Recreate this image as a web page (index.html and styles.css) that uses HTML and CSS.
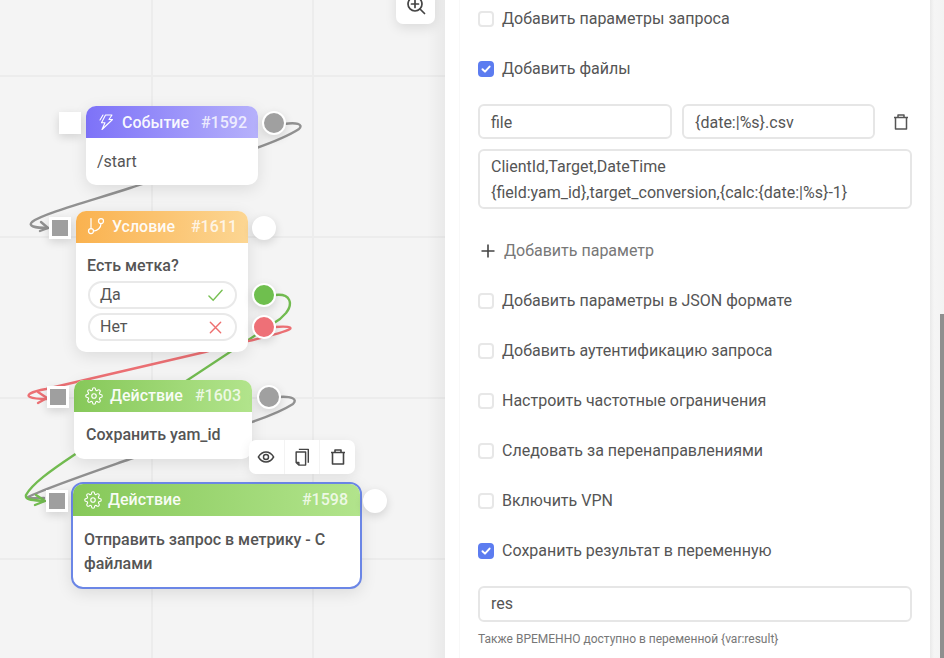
FILE: index.html
```html
<!DOCTYPE html>
<html lang="ru">
<head>
<meta charset="utf-8">
<title>Редактор сценария</title>
<link rel="stylesheet" href="styles.css">
</head>
<body>
<svg class="defs" width="0" height="0" aria-hidden="true">
  <symbol id="gear" viewBox="0 0 24 24">
    <circle cx="12" cy="12" r="3"/>
    <path d="M19.4 15a1.65 1.65 0 0 0 .33 1.82l.06.06a2 2 0 0 1 0 2.83 2 2 0 0 1-2.83 0l-.06-.06a1.65 1.65 0 0 0-1.82-.33 1.65 1.65 0 0 0-1 1.51V21a2 2 0 0 1-2 2 2 2 0 0 1-2-2v-.09A1.65 1.65 0 0 0 9 19.4a1.65 1.65 0 0 0-1.82.33l-.06.06a2 2 0 0 1-2.83 0 2 2 0 0 1 0-2.83l.06-.06a1.65 1.65 0 0 0 .33-1.82 1.65 1.65 0 0 0-1.51-1H3a2 2 0 0 1-2-2 2 2 0 0 1 2-2h.09A1.65 1.65 0 0 0 4.6 9a1.65 1.65 0 0 0-.33-1.82l-.06-.06a2 2 0 0 1 0-2.83 2 2 0 0 1 2.83 0l.06.06a1.65 1.65 0 0 0 1.82.33H9a1.65 1.65 0 0 0 1-1.51V3a2 2 0 0 1 2-2 2 2 0 0 1 2 2v.09a1.65 1.65 0 0 0 1 1.51 1.65 1.65 0 0 0 1.82-.33l.06-.06a2 2 0 0 1 2.83 0 2 2 0 0 1 0 2.83l-.06.06a1.65 1.65 0 0 0-.33 1.82V9a1.65 1.65 0 0 0 1.51 1H21a2 2 0 0 1 2 2 2 2 0 0 1-2 2h-.09a1.65 1.65 0 0 0-1.51 1z"/>
  </symbol>
  <symbol id="trash" viewBox="0 0 18 18">
    <path d="M2 4.500h14M6 4.500V2h6v2.500M3.500 4.500V16h11V4.500"/>
  </symbol>
  <symbol id="tick" viewBox="0 0 12 12">
    <path d="M2.500 6.200 5 8.600 9.600 3.600"/>
  </symbol>
</svg>

<div class="app">
  <main class="canvas">
    <svg class="wires" width="445" height="658" viewBox="0 0 445 658" fill="none" aria-hidden="true">
      <g class="wire-grey">
        <path d="M284 124C296 122 304 124 299 129C270 148 190 168 130 188C90 201 42 214 32 222C28 226 34 228 48 228"/>
        <path d="M41 222 48 228 40 231"/>
        <path d="M278 397C292 396 298 399 293 404C262 424 180 442 130 459C90 473 46 488 28 497C30 499 36 498 44 498"/>
      </g>
      <g class="wire-green">
        <path d="M275 295C291 293 293 304 286 313L280 319L74 455C50 471 32 484 26 495C25 500 32 500 44 501"/>
        <path d="M36 495 45 501 35 505"/>
      </g>
      <g class="wire-red">
        <path d="M275 327C287 326 292 327 290 329C280 335 240 342 205 352L46 389C30 392 26 395 30 397C34 399 40 399 47 399"/>
        <path d="M38 392 47 398 38 403"/>
      </g>
    </svg>

    <div class="tool-zoom">
      <svg class="ico-zoom" viewBox="0 0 20 20" fill="none">
        <circle cx="9" cy="9" r="7"/>
        <path d="M9 5.500v7M5.500 9h7M14 14l4.500 4.500"/>
      </svg>
    </div>

    <section class="node node-event">
      <span class="in-port"></span>
      <header class="node-head head-event">
        <svg class="head-ico bolt-ico" viewBox="0 0 16 16" fill="none">
          <path d="M7.500 1H14L11 5.500H14.500L4 15.500 7 8.800H3.500Z"/>
          <path d="M5 1 2 6"/>
        </svg>
        <span class="head-title">Событие</span>
        <span class="head-id">#1592</span>
      </header>
      <div class="node-body">/start</div>
      <span class="out-port port-grey"></span>
    </section>

    <section class="node node-cond">
      <span class="in-port port-in-grey"></span>
      <header class="node-head head-cond">
        <svg class="head-ico branch-ico" viewBox="0 0 24 24" fill="none">
          <path d="M6 3v12M18 9a9 9 0 0 1-9 9"/>
          <circle cx="18" cy="6" r="3"/>
          <circle cx="6" cy="18" r="3"/>
        </svg>
        <span class="head-title">Условие</span>
        <span class="head-id">#1611</span>
      </header>
      <div class="node-body cond-body">
        <div class="cond-title">Есть метка?</div>
        <div class="choice">
          <span>Да</span>
          <svg class="choice-ico ico-yes" viewBox="0 0 16 16" fill="none"><path d="M1 8.500 5.500 13 15 2.500"/></svg>
        </div>
        <div class="choice">
          <span>Нет</span>
          <svg class="choice-ico ico-no" viewBox="0 0 16 16" fill="none"><path d="M2.500 2.500 13.500 13.500M13.500 2.500 2.500 13.500"/></svg>
        </div>
      </div>
      <span class="out-port"></span>
      <span class="out-port port-yes"></span>
      <span class="out-port port-no"></span>
    </section>

    <section class="node node-save">
      <span class="in-port port-in-grey"></span>
      <header class="node-head head-action">
        <svg class="head-ico gear-ico"><use href="#gear"/></svg>
        <span class="head-title">Действие</span>
        <span class="head-id">#1603</span>
      </header>
      <div class="node-body body-strong">Сохранить yam_id</div>
      <span class="out-port port-grey"></span>
    </section>

    <div class="node-tools">
      <span class="tool-cell">
        <svg class="tool-ico" viewBox="0 0 20 20" fill="none">
          <path d="M1.500 10C4 6 7 4.500 10 4.500S16 6 18.500 10C16 14 13 15.500 10 15.500S4 14 1.500 10Z"/>
          <circle cx="10" cy="10" r="2.800"/>
        </svg>
      </span>
      <span class="tool-cell">
        <svg class="tool-ico" viewBox="0 0 20 20" fill="none">
          <path d="M6.500 1.500H17V16.500"/>
          <path d="M3.500 4.500H14V19H6.500L3.500 16Z"/>
          <path d="M3.500 16H6.500V19"/>
        </svg>
      </span>
      <span class="tool-cell">
        <svg class="tool-ico"><use href="#trash"/></svg>
      </span>
    </div>

    <section class="node node-send">
      <span class="in-port port-in-grey"></span>
      <header class="node-head head-action">
        <svg class="head-ico gear-ico"><use href="#gear"/></svg>
        <span class="head-title">Действие</span>
        <span class="head-id">#1598</span>
      </header>
      <div class="node-body body-strong">Отправить запрос в метрику - С файлами</div>
      <span class="out-port"></span>
    </section>
  </main>

  <aside class="panel">
    <div class="form">
      <label class="check-row"><span class="box"></span>Добавить параметры запроса</label>
      <label class="check-row check-files"><span class="box box-on"><svg class="tick"><use href="#tick"/></svg></span>Добавить файлы</label>

      <div class="file-row">
        <div class="field field-name">file</div>
        <div class="field field-value">{date:|%s}.csv</div>
        <svg class="file-trash"><use href="#trash"/></svg>
      </div>
      <div class="field field-area">ClientId,Target,DateTime<br>{field:yam_id},target_conversion,{calc:{date:|%s}-1}</div>

      <div class="add-param">
        <svg class="add-ico" viewBox="0 0 14 14" fill="none"><path d="M7 0.500V13.500M0.500 7H13.500"/></svg>
        Добавить параметр
      </div>

      <label class="check-row"><span class="box"></span>Добавить параметры в JSON формате</label>
      <label class="check-row"><span class="box"></span>Добавить аутентификацию запроса</label>
      <label class="check-row"><span class="box"></span>Настроить частотные ограничения</label>
      <label class="check-row"><span class="box"></span>Следовать за перенаправлениями</label>
      <label class="check-row"><span class="box"></span>Включить VPN</label>
      <label class="check-row check-last"><span class="box box-on"><svg class="tick"><use href="#tick"/></svg></span>Сохранить результат в переменную</label>

      <div class="field field-res">res</div>
      <p class="hint">Также ВРЕМЕННО доступно в переменной {var:result}</p>
    </div>
    <div class="gutter"><span class="thumb"></span></div>
  </aside>
</div>
</body>
</html>
```

FILE: styles.css
```css
* { box-sizing: border-box; }

html, body {
  margin: 0;
  height: 100%;
  overflow: hidden;
}

body {
  font-family: Roboto, "Liberation Sans", sans-serif;
  font-size: 16px;
  color: #555;
  background: #fff;
}

.defs { position: absolute; }

.app {
  display: flex;
  width: 944px;
  height: 658px;
}

/* canvas */
.canvas {
  position: relative;
  flex: 0 0 445px;
  height: 658px;
  overflow: hidden;
  background-color: #f4f4f4;
  background-image:
    linear-gradient(to right, #ececec 0, #ececec 2px, transparent 2px),
    linear-gradient(to bottom, #ececec 0, #ececec 2px, transparent 2px);
  background-size: 161px 161px;
  background-position: -10px -86px;
}

.canvas::after {
  content: "";
  position: absolute;
  top: 0;
  right: 0;
  bottom: 0;
  width: 18px;
  background: linear-gradient(to right, rgba(0, 0, 0, 0), rgba(0, 0, 0, .045));
  pointer-events: none;
}

.wires {
  position: absolute;
  top: 0;
  left: 0;
  stroke-width: 2.400;
  stroke-linecap: round;
  stroke-linejoin: round;
}

.wire-grey { stroke: #919191; }
.wire-green { stroke: #72bb50; }
.wire-red { stroke: #ec7074; }

.tool-zoom {
  position: absolute;
  top: -16px;
  left: 396px;
  z-index: 3;
  display: flex;
  align-items: center;
  justify-content: center;
  width: 39px;
  height: 40px;
  background: #fff;
  border-radius: 7px;
  box-shadow: 0 4px 12px rgba(0, 0, 0, .1);
}

.ico-zoom {
  width: 20px;
  height: 20px;
  margin-top: 1px;
  stroke: #444;
  stroke-width: 1.700;
  stroke-linecap: round;
}

/* nodes */
.node {
  position: absolute;
  z-index: 2;
  background: #fff;
  border-radius: 10px;
  box-shadow: 0 4px 16px rgba(0, 0, 0, .1);
}

.node-event { left: 86px; top: 106px; width: 172px; }
.node-cond { left: 76px; top: 211px; width: 172px; }
.node-save { left: 74px; top: 380px; width: 178px; }
.node-send {
  left: 71px;
  top: 482px;
  width: 291px;
  border: 2px solid #6b86e6;
  border-radius: 12px;
}

.node-head {
  display: flex;
  align-items: center;
  height: 32px;
  padding: 0 11px 0 12px;
  border-radius: 10px 10px 0 0;
  color: #fff;
  font-weight: 500;
  line-height: 32px;
}

.head-event {
  padding-top: 1px;
  background: linear-gradient(to right, #7d72f8, #b6b1fb);
}
.head-cond { background: linear-gradient(to right, #fab24f, #fcd693); }
.head-action { background: linear-gradient(to right, #86c859, #b2e48c); }

.head-ico {
  flex: none;
  width: 16px;
  height: 16px;
  margin-right: 8px;
  fill: none;
  stroke: #fff;
  stroke-width: 1.300;
  stroke-linejoin: round;
  stroke-linecap: round;
}

.bolt-ico { stroke-width: 1.100; margin-top: -2px; }

.branch-ico {
  width: 20px;
  height: 20px;
  margin: -2px 6px 0 -2px;
  stroke-width: 1.500;
}

.gear-ico {
  width: 18px;
  height: 18px;
  margin: -1px 7px 0 -1px;
  stroke-width: 1.500;
}

.node-send .gear-ico { margin-right: 6px; }
.node-send .node-head { padding-right: 12px; }

.head-title { color: rgba(255, 255, 255, .95); }
.head-id { margin-left: auto; color: rgba(255, 255, 255, .8); }

.node-body {
  padding: 12px 11px 11px;
  line-height: 24px;
}

.node-save .node-body { padding: 11px 11px 12px 12px; }
.body-strong { font-weight: 500; }

.cond-body { padding-top: 11px; }
.cond-title { height: 23px; font-weight: 500; }

.choice {
  display: flex;
  align-items: center;
  justify-content: space-between;
  height: 28px;
  margin: 4px 0 0 1px;
  padding: 0 12px 0 10px;
  border: 2px solid #e9e9e9;
  border-radius: 14px;
  line-height: 24px;
}

.choice-ico {
  width: 15px;
  height: 15px;
  stroke-width: 1.500;
  stroke-linecap: round;
}

.ico-yes { stroke: #77c052; }
.ico-no { stroke: #ee6f6f; }

/* ports */
.in-port {
  position: absolute;
  top: 6px;
  left: -27px;
  width: 22px;
  height: 22px;
  background: #fff;
  border: 3px solid #fff;
  box-shadow: 0 3px 10px rgba(0, 0, 0, .14);
}

.port-in-grey { background: #9f9f9f; }

.out-port {
  position: absolute;
  top: 5px;
  right: -28px;
  width: 24px;
  height: 24px;
  background: #fff;
  border: 2px solid #fff;
  border-radius: 50%;
  box-shadow: 0 3px 10px rgba(0, 0, 0, .14);
}

.port-grey { background: #a0a0a0; }
.port-yes { top: 72px; background: #6fbf4e; }
.port-no { top: 104px; background: #ee7077; }
.node-save .out-port { right: -29px; }
.node-send .out-port { right: -27px; }

/* node toolbar */
.node-tools {
  position: absolute;
  left: 249px;
  top: 440px;
  z-index: 3;
  display: flex;
  width: 106px;
  height: 34px;
  background: #fff;
  border-radius: 7px;
  box-shadow: 0 3px 12px rgba(0, 0, 0, .08);
}

.tool-cell {
  display: flex;
  flex: 1;
  align-items: center;
  justify-content: center;
  border-left: 1px solid #f3f3f3;
}

.tool-cell:first-child { border-left: 0; }

.tool-ico {
  width: 18px;
  height: 20px;
  fill: none;
  stroke: #444;
  stroke-width: 1.600;
  stroke-linejoin: round;
}

/* side panel */
.panel {
  display: flex;
  flex: 1;
  height: 658px;
  background: #fff;
}

.form {
  flex: 1;
  margin-left: 14px;
  padding: 9px 18px 0;
  border-left: 1px solid #f8f8f8;
}

.check-row {
  display: flex;
  align-items: center;
  gap: 8px;
  height: 20px;
  margin-bottom: 30px;
  line-height: 20px;
}

.check-files { margin-bottom: 25px; }
.check-last { margin-bottom: 25px; }

.box {
  flex: none;
  display: flex;
  align-items: center;
  justify-content: center;
  width: 16px;
  height: 16px;
  background: #fff;
  border: 2px solid #e7e7e7;
  border-radius: 4px;
}

.box-on {
  background: #5c7cf0;
  border-color: #5c7cf0;
}

.tick {
  width: 12px;
  height: 12px;
  fill: none;
  stroke: #fff;
  stroke-width: 2;
  stroke-linecap: round;
  stroke-linejoin: round;
}

.file-row {
  display: flex;
  align-items: center;
  gap: 10px;
  margin-bottom: 10px;
}

.field {
  height: 35px;
  padding: 0 11px;
  background: #fff;
  border: 2px solid #e6e6e6;
  border-radius: 6px;
  line-height: 33px;
}

.field-name { flex: 0 0 194px; }
.field-value { flex: 0 0 193px; }

.file-trash {
  flex: none;
  width: 18px;
  height: 18px;
  margin-left: 7px;
  fill: none;
  stroke: #555;
  stroke-width: 1.500;
  stroke-linejoin: round;
}

.field-area {
  height: 60px;
  padding-top: 3px;
  line-height: 26px;
  white-space: nowrap;
}

.add-param {
  display: flex;
  align-items: center;
  gap: 9px;
  height: 20px;
  margin: 32px 0 30px 3px;
  color: #777;
  line-height: 20px;
}

.add-ico {
  width: 14px;
  height: 14px;
  stroke: #444;
  stroke-width: 1.600;
}

.field-res { height: 36px; line-height: 32px; }

.hint {
  margin: 9px 0 0;
  color: #777;
  font-size: 12px;
  line-height: 16px;
}

.gutter {
  flex: 0 0 14px;
  display: flex;
  justify-content: flex-end;
  padding-top: 314px;
  background: linear-gradient(to right, #e9e9e9, #f5f5f5 4px, #f3f3f3);
}

.thumb {
  display: block;
  width: 4px;
  height: 344px;
  background: #8f8f8f;
}
```
